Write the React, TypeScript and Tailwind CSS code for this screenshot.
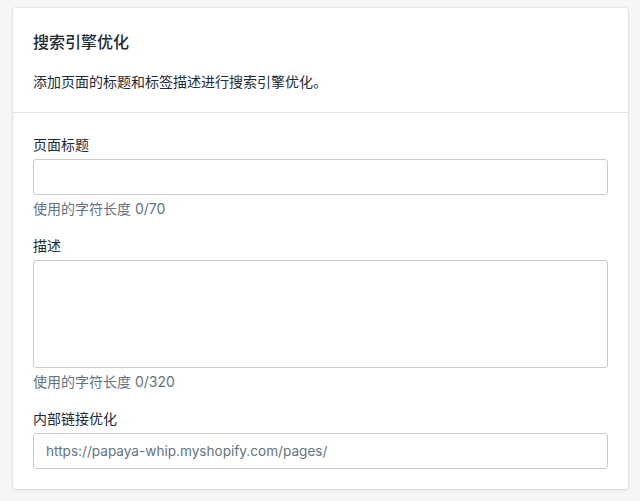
export default function App() {
  const font = {
    fontFamily: 'Inter, "Noto Sans CJK SC", sans-serif',
  };

  return (
    <div className="min-h-screen w-full bg-[#f4f6f8] pt-2 pl-[13px] pr-[12px]" style={font}>
      <div className="rounded-[3px] bg-white shadow-[0_0_0_1px_rgba(63,63,68,0.05),0_1px_3px_0_rgba(63,63,68,0.15)]">
        {/* Header */}
        <div className="px-5 pt-[22px]">
          <h2 className="text-[16px] leading-6 font-medium text-[#212b36]">搜索引擎优化</h2>
        </div>
        <div className="px-5 pt-[18px] pb-5">
          <p className="text-[14px] leading-5 text-[#212b36]">添加页面的标题和标签描述进行搜索引擎优化。</p>
        </div>

        {/* Fields */}
        <div className="border-t border-[#dfe3e8] px-5 pt-[22px] pb-5">
          <div className="flex flex-col">
            <label className="mb-1 text-[14px] leading-5 text-[#212b36]">页面标题</label>
            <input
              className="h-9 w-full rounded-[3px] border border-[#c4cdd5] px-3 text-[14px] text-[#212b36] outline-none"
              style={font}
            />
            <p className="mt-1 text-[14px] leading-5 text-[#637381]">使用的字符长度 0/70</p>
          </div>

          <div className="mt-[17px] flex flex-col">
            <label className="mb-1 text-[14px] leading-5 text-[#212b36]">描述</label>
            <textarea
              className="h-[108px] w-full resize-none rounded-[3px] border border-[#c4cdd5] px-3 py-2 text-[14px] text-[#212b36] outline-none"
              style={font}
            />
            <p className="mt-1 text-[14px] leading-5 text-[#637381]">使用的字符长度 0/320</p>
          </div>

          <div className="mt-[17px] flex flex-col">
            <label className="mb-1 text-[14px] leading-5 text-[#212b36]">内部链接优化</label>
            <input
              className="h-9 w-full rounded-[3px] border border-[#c4cdd5] px-3 text-[13.6px] text-[#212b36] outline-none placeholder:text-[#637381]"
              placeholder="https://papaya-whip.myshopify.com/pages/"
              style={font}
            />
          </div>
        </div>
      </div>
    </div>
  );
}
